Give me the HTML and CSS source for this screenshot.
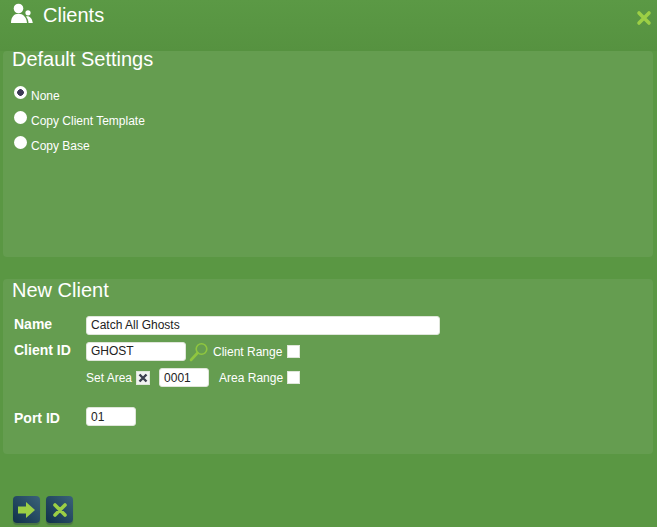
FILE: index.html
```html
<!DOCTYPE html>
<html lang="en">
<head>
<meta charset="utf-8">
<title>Clients</title>
<link rel="stylesheet" href="styles.css">
</head>
<body>
<div class="page">
  <header class="header">
    <svg class="people" width="22" height="20" viewBox="0 0 22 20"><circle cx="7.500" cy="5.500" r="4.800" fill="#fff"/><path d="M0 20c0-6 3-9.300 7.500-9.300S15.500 14 16 20z" fill="#fff"/><circle cx="17" cy="9.800" r="2.600" fill="#fff"/><path d="M15 13.400c3-1 6 1 6.800 6.600h-4.300c0-2.500-1-4.900-2.500-6.600z" fill="#fff"/></svg>
    <h1 class="title">Clients</h1>
    <svg class="close" width="16" height="16" viewBox="0 0 16 16"><path d="M3 3l10 10M13 3L3 13" stroke="#9ccf45" stroke-width="3.600" stroke-linecap="round"/></svg>
  </header>

  <section class="panel panel-settings">
    <h2 class="panel-title">Default Settings</h2>
    <div class="radio-list">
      <label class="radio-row"><input type="radio" name="d" class="radio" checked><span>None</span></label>
      <label class="radio-row"><input type="radio" name="d" class="radio"><span>Copy Client Template</span></label>
      <label class="radio-row"><input type="radio" name="d" class="radio"><span>Copy Base</span></label>
    </div>
  </section>

  <section class="panel panel-client">
    <h2 class="panel-title">New Client</h2>
    <div class="form">
      <div class="row row-name">
        <span class="field-label">Name</span>
        <input class="text wide lifted" type="text" value="Catch All Ghosts">
      </div>
      <div class="row row-id">
        <span class="field-label">Client ID</span>
        <input class="text mid lifted" type="text" value="GHOST">
        <svg class="lens" width="20" height="20" viewBox="0 0 20 20"><circle cx="12.500" cy="7" r="5.300" fill="none" stroke="#8fc63f" stroke-width="1.600"/><path d="M8.500 11L2 18" stroke="#8fc63f" stroke-width="2.600" stroke-linecap="round"/></svg>
        <span class="small client-range">Client Range</span>
        <span class="box client-box"></span>
      </div>
      <div class="row row-area">
        <span class="field-label"></span>
        <span class="small">Set Area</span>
        <span class="box checked"><svg width="12" height="12" viewBox="0 0 12 12"><path d="M2.500 2.500l7 7M9.500 2.500l-7 7" stroke="#3b3f4e" stroke-width="2.400"/></svg></span>
        <input class="text short" type="text" value="0001">
        <span class="small area-range">Area Range</span>
        <span class="box"></span>
      </div>
      <div class="row row-port">
        <span class="field-label port-label">Port ID</span>
        <input class="text short" type="text" value="01">
      </div>
    </div>
  </section>

  <footer class="actions">
    <button class="action" type="button" aria-label="Next"><svg width="18" height="16" viewBox="0 0 18 16"><path d="M0 4.500h8V0l9 8-9 8v-4.500H0z" fill="#9ccf45"/></svg></button>
    <button class="action" type="button" aria-label="Cancel"><svg width="16" height="16" viewBox="0 0 16 16"><path d="M3 3l10 10M13 3L3 13" stroke="#9ccf45" stroke-width="3.600" stroke-linecap="round"/></svg></button>
  </footer>
</div>
</body>
</html>
```
FILE: styles.css
```css
* { box-sizing: border-box; }
html, body { margin: 0; height: 100%; }
body {
  background: #5a9743;
  color: #fff;
  font-family: "Liberation Sans", Arial, sans-serif;
  overflow: hidden;
}
.page { height: 527px; display: flex; flex-direction: column; }
.header {
  height: 51px;
  flex: none;
  display: flex;
  align-items: flex-start;
  padding: 3px 5px 0 11px;
  background: linear-gradient(#5b9945, #569240);
}
.people { flex: none; }
.title { margin: 0 0 0 10px; font-size: 20px; font-weight: 400; line-height: 24px; }
.close { margin: 7px 0 0 auto; flex: none; }
.panel {
  margin: 0 4px 0 3px;
  background: #659d50;
  border-radius: 4px;
  padding: 0 9px;
  flex: none;
}
.panel-settings { height: 206px; }
.panel-client { height: 175px; margin-top: 22px; }
.panel-title { margin: 0; font-size: 20px; font-weight: 400; line-height: 22px; }
.panel-settings .panel-title { line-height: 16px; }
.radio-list { padding: 18px 0 0 2px; display: flex; flex-direction: column; }
.radio-row { display: flex; align-items: flex-start; height: 25px; font-size: 12px; line-height: 14px; }
.radio-row span { margin-top: 4px; }
.radio {
  appearance: none;
  margin: 1px 4px 0 0;
  width: 13px;
  height: 13px;
  flex: none;
  border-radius: 50%;
  background: #fff;
}
.radio:checked { background: radial-gradient(circle, #3d3a55 0 3px, #fff 3.6px); }
.form { padding: 15px 0 0 2px; }
.row { display: flex; align-items: center; font-size: 12px; height: 19px; }
.row-id { margin-top: 7px; }
.row-area { margin-top: 7px; }
.row-port { margin-top: 20px; }
.field-label { width: 72px; flex: none; font-size: 14px; font-weight: 700; margin-bottom: 3px; }
.port-label { margin: 2px 0 0; }
.text {
  height: 19px;
  border: 1px solid #dfe6da;
  border-radius: 3px;
  background: #fff;
  color: #222;
  font: 12px "Liberation Sans", Arial, sans-serif;
  padding: 0 4px;
  outline: none;
}
.lifted { padding-bottom: 2px; }
.wide { width: 354px; }
.mid { width: 100px; }
.short { width: 50px; }
.lens { margin-left: 3px; flex: none; }
.client-range { margin-left: 4px; }
.box {
  width: 13px;
  height: 13px;
  flex: none;
  margin-left: 4px;
  background: #fff;
  border: 1px solid #dfe6da;
  display: flex;
}
.client-box { margin-left: 5px; }
.checked { width: 14px; height: 14px; margin: 0 9px 0 4px; background: #f1f3f0; }
.area-range { margin-left: 10px; }
.actions { display: flex; gap: 6px; padding: 42px 0 0 13px; }
.action {
  width: 27px;
  height: 27px;
  border: 0;
  padding: 0;
  border-radius: 4px;
  background: linear-gradient(45deg, #10304a, #3a6279);
  box-shadow: 0 2px 1px rgba(60, 90, 70, .55);
  display: flex;
  align-items: center;
  justify-content: center;
}
```
